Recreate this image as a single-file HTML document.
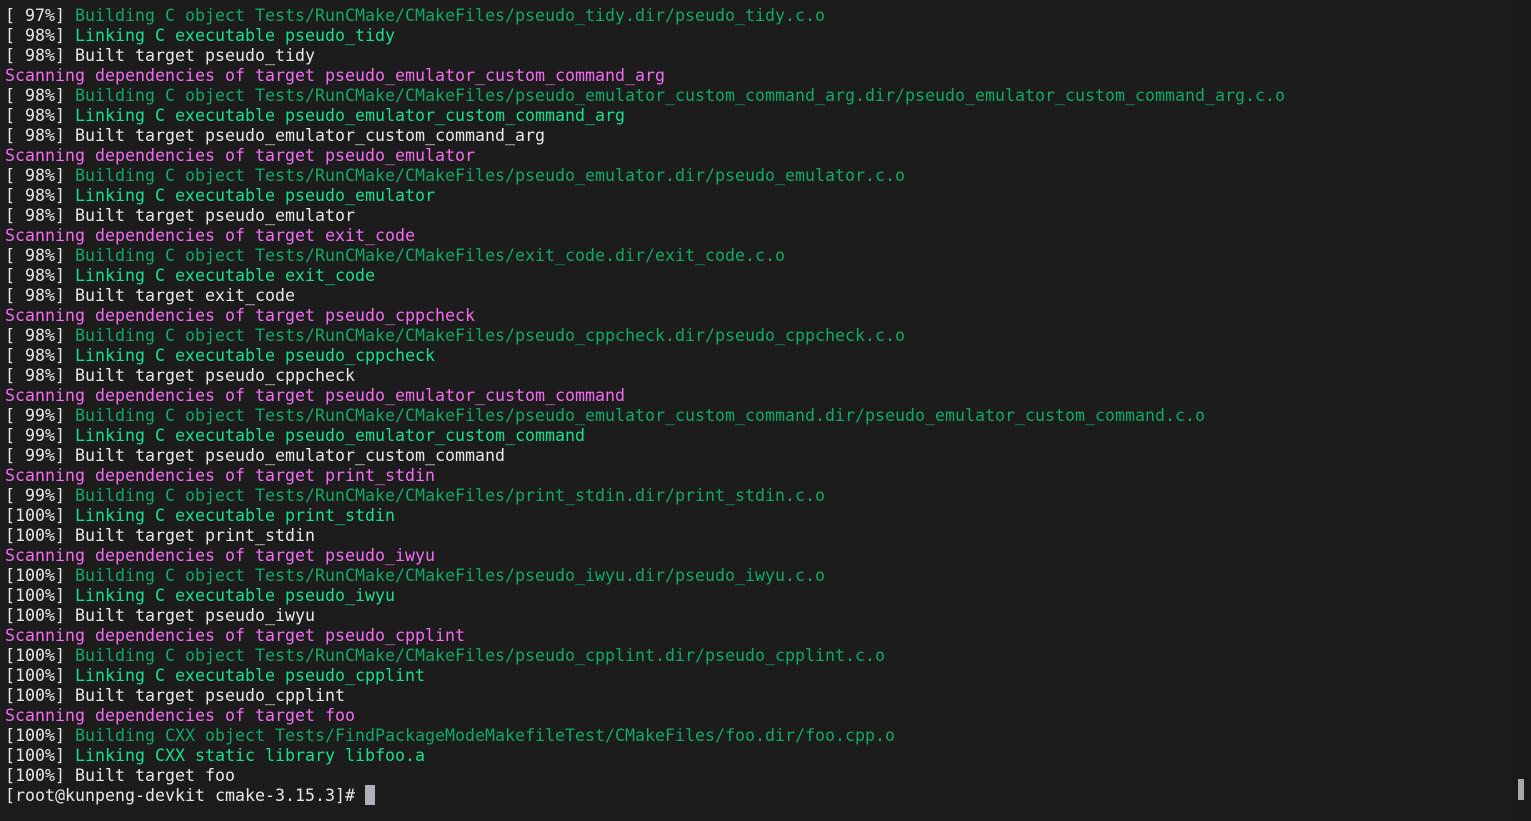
<!DOCTYPE html>
<html><head><meta charset="utf-8"><style>
html,body{margin:0;padding:0;background:#1c1c1c;width:1531px;height:821px;overflow:hidden}
#t{position:absolute;left:5px;top:6px;margin:0;font:16.61px/20px "DejaVu Sans Mono","Liberation Mono",monospace;color:#e8e8e8;white-space:pre}
.b{color:#0fa968}.l{color:#17e08c}.s{color:#f46cf4}
#sb{position:absolute;left:1511px;top:0;width:20px;height:821px;background:#191919}
#th{position:absolute;left:1518px;top:779px;width:6px;height:21px;background:#a8a8a8}
#c{position:absolute;left:365px;top:785px;width:10px;height:20px;background:#b0b0b8}
</style></head><body>
<pre id="t">[ 97%] <span class="b">Building C object Tests/RunCMake/CMakeFiles/pseudo_tidy.dir/pseudo_tidy.c.o</span>
[ 98%] <span class="l">Linking C executable pseudo_tidy</span>
[ 98%] Built target pseudo_tidy
<span class="s">Scanning dependencies of target pseudo_emulator_custom_command_arg</span>
[ 98%] <span class="b">Building C object Tests/RunCMake/CMakeFiles/pseudo_emulator_custom_command_arg.dir/pseudo_emulator_custom_command_arg.c.o</span>
[ 98%] <span class="l">Linking C executable pseudo_emulator_custom_command_arg</span>
[ 98%] Built target pseudo_emulator_custom_command_arg
<span class="s">Scanning dependencies of target pseudo_emulator</span>
[ 98%] <span class="b">Building C object Tests/RunCMake/CMakeFiles/pseudo_emulator.dir/pseudo_emulator.c.o</span>
[ 98%] <span class="l">Linking C executable pseudo_emulator</span>
[ 98%] Built target pseudo_emulator
<span class="s">Scanning dependencies of target exit_code</span>
[ 98%] <span class="b">Building C object Tests/RunCMake/CMakeFiles/exit_code.dir/exit_code.c.o</span>
[ 98%] <span class="l">Linking C executable exit_code</span>
[ 98%] Built target exit_code
<span class="s">Scanning dependencies of target pseudo_cppcheck</span>
[ 98%] <span class="b">Building C object Tests/RunCMake/CMakeFiles/pseudo_cppcheck.dir/pseudo_cppcheck.c.o</span>
[ 98%] <span class="l">Linking C executable pseudo_cppcheck</span>
[ 98%] Built target pseudo_cppcheck
<span class="s">Scanning dependencies of target pseudo_emulator_custom_command</span>
[ 99%] <span class="b">Building C object Tests/RunCMake/CMakeFiles/pseudo_emulator_custom_command.dir/pseudo_emulator_custom_command.c.o</span>
[ 99%] <span class="l">Linking C executable pseudo_emulator_custom_command</span>
[ 99%] Built target pseudo_emulator_custom_command
<span class="s">Scanning dependencies of target print_stdin</span>
[ 99%] <span class="b">Building C object Tests/RunCMake/CMakeFiles/print_stdin.dir/print_stdin.c.o</span>
[100%] <span class="l">Linking C executable print_stdin</span>
[100%] Built target print_stdin
<span class="s">Scanning dependencies of target pseudo_iwyu</span>
[100%] <span class="b">Building C object Tests/RunCMake/CMakeFiles/pseudo_iwyu.dir/pseudo_iwyu.c.o</span>
[100%] <span class="l">Linking C executable pseudo_iwyu</span>
[100%] Built target pseudo_iwyu
<span class="s">Scanning dependencies of target pseudo_cpplint</span>
[100%] <span class="b">Building C object Tests/RunCMake/CMakeFiles/pseudo_cpplint.dir/pseudo_cpplint.c.o</span>
[100%] <span class="l">Linking C executable pseudo_cpplint</span>
[100%] Built target pseudo_cpplint
<span class="s">Scanning dependencies of target foo</span>
[100%] <span class="b">Building CXX object Tests/FindPackageModeMakefileTest/CMakeFiles/foo.dir/foo.cpp.o</span>
[100%] <span class="l">Linking CXX static library libfoo.a</span>
[100%] Built target foo
[root@kunpeng-devkit cmake-3.15.3]# </pre>
<div id="c"></div><div id="sb"></div><div id="th"></div>
</body></html>
